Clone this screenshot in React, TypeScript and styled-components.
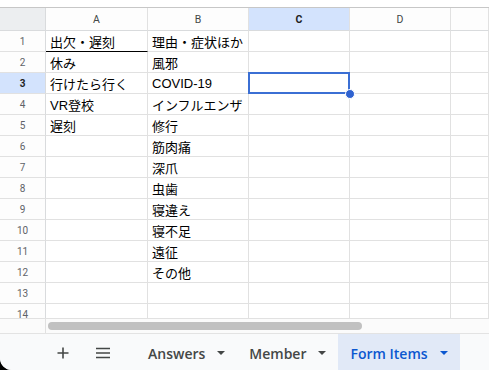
import styled, { createGlobalStyle } from "styled-components";

const GlobalStyle = createGlobalStyle`
  html, body {
    margin: 0;
    padding: 0;
    background: #000;
  }
  * {
    box-sizing: border-box;
  }
`;

const COLS = "46px 102px 101px 101px 101px 1fr";
const CELL_FONT = `"Liberation Sans", "Noto Sans CJK JP", sans-serif`;
const UI_FONT = `Roboto, "Liberation Sans", sans-serif`;
const TAB_FONT = `"Open Sans", Roboto, sans-serif`;

const colA = ["出欠・遅刻", "休み", "行けたら行く", "VR登校", "遅刻"];
const colB = [
  "理由・症状ほか",
  "風邪",
  "COVID-19",
  "インフルエンザ",
  "修行",
  "筋肉痛",
  "深爪",
  "虫歯",
  "寝違え",
  "寝不足",
  "遠征",
  "その他",
];

const SELECTED_ROW = 3;
const SELECTED_COL = 2; // C

const App = () => {
  const rows = Array.from({ length: 14 }, (_, i) => i + 1);
  return (
    <Page>
      <GlobalStyle />
      <TopStrip />
      <HeaderRow>
        <Corner />
        {["A", "B", "C", "D", ""].map((l, i) => (
          <ColHead key={i} $active={i === SELECTED_COL}>
            {l}
          </ColHead>
        ))}
      </HeaderRow>
      <Body>
        {rows.map((r) => (
          <Row key={r}>
            <RowHead $active={r === SELECTED_ROW}>{r}</RowHead>
            <Cell $underline={r === 1}>{colA[r - 1] ?? ""}</Cell>
            <Cell>{colB[r - 1] ?? ""}</Cell>
            <Cell $selected={r === SELECTED_ROW}>
              {r === SELECTED_ROW && <Handle />}
            </Cell>
            <Cell />
            <Cell />
          </Row>
        ))}
      </Body>
      <ScrollRow>
        <ScrollCorner />
        <Track>
          <Thumb />
        </Track>
      </ScrollRow>
      <TabBar>
        <IconBtn>
          <svg width="14" height="14" viewBox="0 0 14 14">
            <path d="M7 1.5v11M1.5 7h11" stroke="#444746" strokeWidth="1.6" />
          </svg>
        </IconBtn>
        <IconBtn>
          <svg width="16" height="12" viewBox="0 0 16 12">
            <path
              d="M1 1.5h14M1 6h14M1 10.5h14"
              stroke="#444746"
              strokeWidth="1.5"
            />
          </svg>
        </IconBtn>
        <Tabs>
          {["Answers", "Member", "Form Items"].map((t) => (
            <Tab key={t} $active={t === "Form Items"}>
              {t}
              <Caret viewBox="0 0 8 4">
                <path d="M0 0h8L4 4z" />
              </Caret>
            </Tab>
          ))}
        </Tabs>
      </TabBar>
    </Page>
  );
};

const Page = styled.div`
  width: 489px;
  height: 370px;
  background: #fff;
  border-bottom-left-radius: 12px;
  overflow: hidden;
  display: flex;
  flex-direction: column;
`;

const TopStrip = styled.div`
  height: 8px;
  flex: none;
  border-bottom: 1px solid #c7c7c7;
  background: #fff;
`;

const HeaderRow = styled.div`
  display: grid;
  grid-template-columns: ${COLS};
  height: 23px;
  flex: none;
`;

const Corner = styled.div`
  background: #eceef0;
  border-right: 1px solid #d9dbdd;
  border-bottom: 1px solid #d9dbdd;
`;

const ColHead = styled.div<{ $active?: boolean }>`
  display: flex;
  align-items: center;
  justify-content: center;
  font-family: ${UI_FONT};
  font-size: 10.5px;
  font-weight: ${(p) => (p.$active ? 700 : 400)};
  color: ${(p) => (p.$active ? "#1f1f1f" : "#444746")};
  background: ${(p) => (p.$active ? "#d3e3fd" : "#fdfdfd")};
  border-right: 1px solid #e1e1e1;
  border-bottom: 1px solid #d9dbdd;
`;

const Body = styled.div`
  height: 287px;
  flex: none;
  overflow: hidden;
`;

const Row = styled.div`
  display: grid;
  grid-template-columns: ${COLS};
  height: 21px;
`;

const RowHead = styled.div<{ $active?: boolean }>`
  display: flex;
  align-items: center;
  justify-content: center;
  font-family: ${UI_FONT};
  font-size: 10px;
  font-weight: ${(p) => (p.$active ? 700 : 400)};
  color: ${(p) => (p.$active ? "#1f1f1f" : "#5f6368")};
  background: ${(p) => (p.$active ? "#d3e3fd" : "#fdfdfd")};
  border-right: 1px solid #d9dbdd;
  border-bottom: 1px solid #e1e1e1;
`;

const Cell = styled.div<{ $underline?: boolean; $selected?: boolean }>`
  position: relative;
  display: flex;
  align-items: center;
  padding: 0 3px 0 4px;
  font-family: ${CELL_FONT};
  font-size: 13px;
  color: #000;
  white-space: nowrap;
  overflow: ${(p) => (p.$selected ? "visible" : "hidden")};
  border-right: 1px solid #e1e1e1;
  border-bottom: 1px solid ${(p) => (p.$underline ? "#000" : "#e1e1e1")};
  z-index: ${(p) => (p.$selected ? 2 : "auto")};

  ${(p) =>
    p.$selected &&
    `
    &::after {
      content: "";
      position: absolute;
      top: -1px;
      left: -1px;
      right: -1px;
      bottom: -1px;
      border: 2px solid #3b6fd4;
    }
  `}
`;

const Handle = styled.span`
  position: absolute;
  right: -6px;
  bottom: -6px;
  width: 10px;
  height: 10px;
  border-radius: 50%;
  background: #2f62d0;
  border: 1px solid #fff;
  z-index: 3;
`;

const ScrollRow = styled.div`
  height: 15px;
  flex: none;
  display: flex;
  border-top: 1px solid #e1e1e1;
  background: #fbfbfb;
`;

const ScrollCorner = styled.div`
  width: 46px;
  border-right: 1px solid #e1e1e1;
`;

const Track = styled.div`
  flex: 1;
  display: flex;
  align-items: center;
  padding-left: 2px;
`;

const Thumb = styled.div`
  width: 314px;
  height: 8px;
  border-radius: 4px;
  background: #c1c1c1;
`;

const TabBar = styled.div`
  flex: 1;
  display: flex;
  align-items: stretch;
  padding-left: 43px;
  border-top: 1px solid #e3e3e3;
  background: #f9fafb;
`;

const IconBtn = styled.div`
  width: 40px;
  display: flex;
  align-items: center;
  justify-content: center;
  padding-top: 2px;
`;

const Tabs = styled.div`
  display: flex;
  margin-left: 13px;
`;

const Tab = styled.div<{ $active?: boolean }>`
  display: flex;
  align-items: center;
  gap: 12px;
  padding: 2px 12px 0;
  font-family: ${TAB_FONT};
  font-size: 14px;
  font-weight: 600;
  color: ${(p) => (p.$active ? "#0b57d0" : "#444746")};
  background: ${(p) => (p.$active ? "#e1e9f7" : "transparent")};
  fill: ${(p) => (p.$active ? "#0b57d0" : "#444746")};
`;

const Caret = styled.svg`
  width: 8px;
  height: 4px;
`;

export default App;
